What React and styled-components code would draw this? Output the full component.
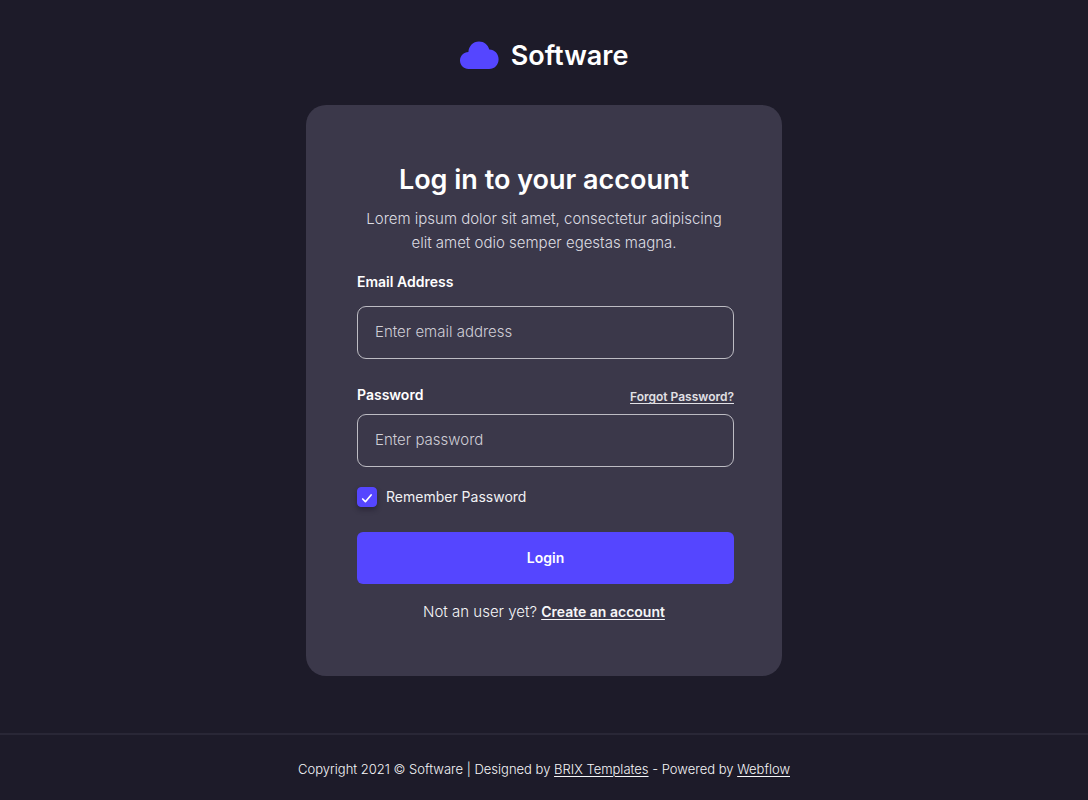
import React, { useState } from "react";
import styled, { createGlobalStyle } from "styled-components";

const GlobalStyle = createGlobalStyle`
  *, *::before, *::after { box-sizing: border-box; }
  body {
    margin: 0;
    background: #1d1b29;
    color: #ffffff;
    font-family: Inter, "Liberation Sans", sans-serif;
    font-size: 14px;
    line-height: 24px;
  }
  h1, p { margin: 0; }
  input, button { font: inherit; color: inherit; }
`;

const Page = styled.div`
  min-height: 100vh;
  display: flex;
  flex-direction: column;
`;

const Header = styled.header`
  display: flex;
  justify-content: center;
  padding: 36px 24px 29px;
`;

const Brand = styled.a`
  display: flex;
  align-items: center;
  gap: 11px;
  color: #ffffff;
  font-size: 27px;
  font-weight: 600;
  line-height: 40px;
  text-decoration: none;
`;

const Main = styled.main`
  flex: 1;
  display: flex;
  justify-content: center;
  align-items: flex-start;
  padding: 0 24px 56px;
`;

const Card = styled.section`
  width: 100%;
  max-width: 476px;
  padding: 57px 48px 52px;
  border-radius: 20px;
  background: #3b384a;
`;

const Title = styled.h1`
  font-size: 27px;
  font-weight: 600;
  line-height: 36px;
  text-align: center;
`;

const Intro = styled.p`
  max-width: 368px;
  margin: 9px auto 17px;
  color: #dddce2;
  font-size: 15px;
  font-weight: 300;
  text-align: center;
`;

const Form = styled.form`
  display: flex;
  flex-direction: column;
  padding-left: 3px;
`;

const Field = styled.div`
  display: flex;
  flex-direction: column;
  gap: ${({ $gap }) => $gap};
  margin-bottom: ${({ $after }) => $after};
`;

const LabelRow = styled.div`
  display: flex;
  justify-content: space-between;
  align-items: flex-end;
`;

const Label = styled.label`
  font-size: 14px;
  font-weight: 600;
  line-height: 20px;
`;

const TextLink = styled.a`
  color: ${({ $color }) => $color || "inherit"};
  font-size: 14px;
  font-weight: ${({ $weight }) => $weight || "inherit"};
  text-decoration: underline;
  text-decoration-thickness: 1px;
  text-underline-offset: 2px;
`;

const ForgotLink = styled(TextLink)`
  font-size: 12px;
  line-height: 16px;
`;

const FooterLink = styled(TextLink)`
  font-size: 13px;
`;

const TextInput = styled.input`
  width: 100%;
  height: 53px;
  padding: 0 17px 2px;
  border: 1px solid #bdbcc3;
  border-radius: 9px;
  background: transparent;
  font-size: 15px;
  font-weight: 300;
  outline: none;

  &::placeholder { color: #cfced6; opacity: 1; }
  &:focus { border-color: #5546ff; }
`;

const Remember = styled.label`
  display: flex;
  align-items: center;
  align-self: flex-start;
  gap: 9px;
  margin: 18px 0 23px;
  color: #f1f1f4;
  cursor: pointer;
`;

const CheckWrap = styled.span`
  position: relative;
  display: flex;
  width: 20px;
  height: 20px;

  svg {
    position: absolute;
    inset: 0;
    pointer-events: none;
  }
`;

const CheckInput = styled.input`
  appearance: none;
  width: 20px;
  height: 20px;
  margin: 0;
  border: 1px solid #bdbcc3;
  border-radius: 4px;
  box-shadow: 0 3px 5px rgba(20, 18, 34, 0.4);
  cursor: pointer;

  &:checked {
    border-color: #5546ff;
    background: #5546ff;
  }
`;

const LoginButton = styled.button`
  height: 52px;
  border: 0;
  border-radius: 6px;
  background: #5546ff;
  color: #ffffff;
  font-weight: 600;
  cursor: pointer;
`;

const SignUp = styled.p`
  margin-top: 16px;
  color: #f6f6f8;
  font-size: 15px;
  font-weight: 300;
  text-align: center;
`;

const Footer = styled.footer`
  padding: 22px 24px 19px;
  border-top: 2px solid #292736;
  color: #f6f6f8;
  font-size: 13px;
  font-weight: 300;
  text-align: center;
`;

function CloudLogo() {
  return (
    <svg width="40" height="30" viewBox="1 0 40 30" aria-hidden="true">
      <path
        fill="#5546ff"
        d="M9.500 28C4.7 28 1 24.3 1 19.6c0-4.7 3.8-8.4 8.4-8.5C9.6 5.1 14.1 .4 20 .4c5 0 9.1 3.3 10.3 8.2 5.3 .1 9.3 4.3 9.3 9.6 0 5.5-4.1 9.8-9.5 9.8Z"
      />
    </svg>
  );
}

function CheckMark() {
  return (
    <svg width="20" height="20" viewBox="0 0 20 20" fill="none" aria-hidden="true">
      <path
        d="m5.7 12 2.7 2.7 5.7-6.7"
        stroke="#ffffff"
        strokeWidth="1.7"
        strokeLinecap="round"
        strokeLinejoin="round"
      />
    </svg>
  );
}

export default function App() {
  const [remember, setRemember] = useState(true);

  return (
    <Page>
      <GlobalStyle />
      <Header>
        <Brand href="#">
          <CloudLogo />
          Software
        </Brand>
      </Header>
      <Main>
        <Card>
          <Title>Log in to your account</Title>
          <Intro>
            Lorem ipsum dolor sit amet, consectetur adipiscing elit amet odio semper egestas magna.
          </Intro>
          <Form onSubmit={(event) => event.preventDefault()}>
            <Field $gap="14px" $after="26px">
              <Label htmlFor="email">Email Address</Label>
              <TextInput id="email" type="email" placeholder="Enter email address" />
            </Field>
            <Field $gap="9px" $after="0">
              <LabelRow>
                <Label htmlFor="password">Password</Label>
                <ForgotLink href="#" $color="#e1e0e5" $weight={600}>
                  Forgot Password?
                </ForgotLink>
              </LabelRow>
              <TextInput id="password" type="password" placeholder="Enter password" />
            </Field>
            <Remember>
              <CheckWrap>
                <CheckInput
                  type="checkbox"
                  checked={remember}
                  onChange={(event) => setRemember(event.target.checked)}
                />
                {remember && <CheckMark />}
              </CheckWrap>
              Remember Password
            </Remember>
            <LoginButton type="submit">Login</LoginButton>
          </Form>
          <SignUp>
            Not an user yet?{" "}
            <TextLink href="#" $weight={600}>
              Create an account
            </TextLink>
          </SignUp>
        </Card>
      </Main>
      <Footer>
        Copyright 2021 © Software | Designed by{" "}
        <FooterLink href="#">BRIX Templates</FooterLink> - Powered by{" "}
        <FooterLink href="#">Webflow</FooterLink>
      </Footer>
    </Page>
  );
}
